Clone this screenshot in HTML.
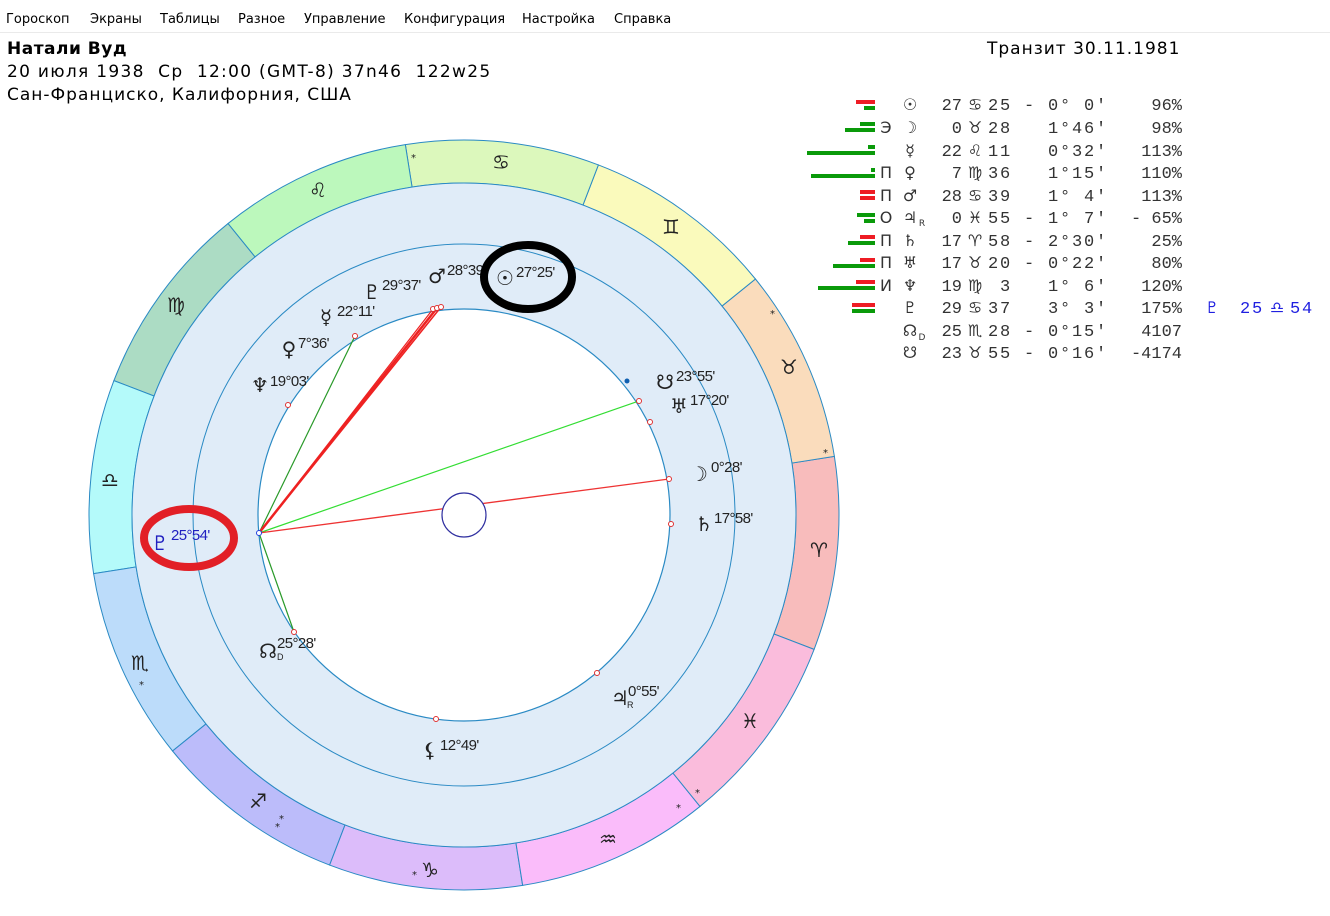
<!DOCTYPE html>
<html><head><meta charset="utf-8">
<style>
html,body{margin:0;padding:0;background:#fff;width:1330px;height:916px;overflow:hidden;}
body{font-family:"Liberation Sans","DejaVu Sans",sans-serif;position:relative;}
.menu{position:absolute;top:0;left:0;width:1330px;height:32px;border-bottom:1px solid #eaeaea;font-size:13px;font-family:"DejaVu Sans",sans-serif;}
.menu span{position:absolute;top:12px;color:#000;}
.hd{position:absolute;font-size:17px;color:#000;white-space:nowrap;font-family:"DejaVu Sans",sans-serif;letter-spacing:1px;}
svg{position:absolute;left:0;top:0;}
</style></head><body>
<div class="menu">
<span style="left:6px">Гороскоп</span><span style="left:90px">Экраны</span><span style="left:160px">Таблицы</span><span style="left:238px">Разное</span><span style="left:304px">Управление</span><span style="left:404px">Конфигурация</span><span style="left:522px">Настройка</span><span style="left:614px">Справка</span>
</div>
<div class="hd" style="left:7px;top:39px;font-weight:bold;letter-spacing:0.5px">Натали Вуд</div>
<div class="hd" style="left:7px;top:62px;letter-spacing:1.3px">20 июля 1938&nbsp; Ср&nbsp; 12:00 (GMT-8) 37n46&nbsp; 122w25</div>
<div class="hd" style="left:7px;top:85px">Сан-Франциско, Калифорния, США</div>
<div class="hd" style="left:987px;top:39px">Транзит 30.11.1981</div>

<svg width="1330" height="916" viewBox="0 0 1330 916" xmlns="http://www.w3.org/2000/svg">
<g id="rings"></g>
<g id="lines" stroke-linecap="round">
<line x1="259" y1="533" x2="355" y2="336" stroke="#2a9a2a" stroke-width="1.2"/>
<line x1="259" y1="533" x2="294" y2="632" stroke="#2a9a2a" stroke-width="1.2"/>
<line x1="259" y1="533" x2="639" y2="401" stroke="#33dd33" stroke-width="1.2"/>
<line x1="259" y1="533" x2="669" y2="479" stroke="#ee3333" stroke-width="1.3"/>
<line x1="259" y1="533" x2="437" y2="308" stroke="#ee2222" stroke-width="2.5"/>
<line x1="259" y1="533" x2="441" y2="307" stroke="#ee2222" stroke-width="1.5"/>
<line x1="259" y1="533" x2="433" y2="309" stroke="#ee2222" stroke-width="1.2"/>
</g>
<circle cx="464" cy="515" r="22" fill="#fff" stroke="#3030a0" stroke-width="1.2"/>
<g fill="#fff" stroke="#e03030" stroke-width="1">
<circle cx="433" cy="309" r="2.5"/><circle cx="437" cy="308" r="2.5"/><circle cx="441" cy="307" r="2.5"/>
<circle cx="355" cy="336" r="2.5"/><circle cx="288" cy="405" r="2.5"/><circle cx="639" cy="401" r="2.5"/>
<circle cx="650" cy="422" r="2.5"/><circle cx="669" cy="479" r="2.5"/><circle cx="671" cy="524" r="2.5"/>
<circle cx="597" cy="673" r="2.5"/><circle cx="436" cy="719" r="2.5"/><circle cx="294" cy="632" r="2.5"/>
</g>
<circle cx="627" cy="381" r="2.5" fill="#1060b0"/>
<circle cx="259" cy="533" r="2.5" fill="#fff" stroke="#2040e0"/>

<g font-family="DejaVu Sans,sans-serif" font-size="20" fill="#222" text-anchor="middle">
<text x="501" y="169">♋&#xFE0E;</text>
<text x="318" y="197">♌&#xFE0E;</text>
<text x="176" y="312">♍&#xFE0E;</text>
<text x="110" y="487">♎&#xFE0E;</text>
<text x="140" y="670">♏&#xFE0E;</text>
<text x="258" y="808">♐&#xFE0E;</text>
<text x="430" y="877">♑&#xFE0E;</text>
<text x="608" y="846">♒&#xFE0E;</text>
<text x="750" y="728">♓&#xFE0E;</text>
<text x="819" y="557">♈&#xFE0E;</text>
<text x="789" y="374">♉&#xFE0E;</text>
<text x="671" y="234">♊&#xFE0E;</text>
</g>
<g font-family="DejaVu Sans,sans-serif" font-size="10" fill="#222">
<text x="411" y="161">*</text><text x="770" y="317">*</text><text x="823" y="456">*</text>
<text x="139" y="688">*</text><text x="275" y="830">*</text><text x="279" y="822">*</text>
<text x="412" y="878">*</text><text x="676" y="811">*</text><text x="695" y="796">*</text>
</g>

<g font-family="DejaVu Sans,sans-serif" font-size="20" fill="#222" text-anchor="middle">
<text x="505" y="285">☉&#xFE0E;</text>
<text x="437" y="283">♂&#xFE0E;</text>
<text x="372" y="299">♇&#xFE0E;</text>
<text x="326" y="324">☿&#xFE0E;</text>
<text x="289" y="356">♀&#xFE0E;</text>
<text x="260" y="392">♆&#xFE0E;</text>
<text x="665" y="389">☋&#xFE0E;</text>
<text x="679" y="413">♅&#xFE0E;</text>
<text x="699" y="481">☽&#xFE0E;</text>
<text x="704" y="531">♄&#xFE0E;</text>
<text x="620" y="705">♃&#xFE0E;</text>
<text x="430" y="757">⚸&#xFE0E;</text>
<text x="268" y="658">☊&#xFE0E;</text>
<text x="160" y="550" fill="#2020c0">♇&#xFE0E;</text>
</g>
<g font-family="Liberation Sans,sans-serif" font-size="15" fill="#222" letter-spacing="-0.6">
<text x="516" y="277">27°25'</text>
<text x="447" y="275">28°39'</text>
<text x="382" y="290">29°37'</text>
<text x="337" y="316">22°11'</text>
<text x="298" y="348">7°36'</text>
<text x="270" y="386">19°03'</text>
<text x="676" y="381">23°55'</text>
<text x="690" y="405">17°20'</text>
<text x="711" y="472">0°28'</text>
<text x="714" y="523">17°58'</text>
<text x="628" y="696">0°55'</text>
<text x="440" y="750">12°49'</text>
<text x="277" y="648">25°28'</text>
<text x="171" y="540" fill="#2020c0">25°54'</text>
<text x="627" y="708" font-size="9">R</text>
<text x="277" y="660" font-size="9">D</text>
</g>
<ellipse cx="528" cy="277" rx="44" ry="32" fill="none" stroke="#000" stroke-width="8"/>
<ellipse cx="189" cy="538" rx="45" ry="29" fill="none" stroke="#e21f26" stroke-width="8"/>

<g>
<rect x="856" y="100" width="19" height="4" fill="#ee1c24"/><rect x="864" y="106" width="11" height="4" fill="#0a9a0a"/>
<rect x="860" y="122" width="15" height="4" fill="#0a9a0a"/><rect x="845" y="128" width="30" height="4" fill="#0a9a0a"/>
<rect x="868" y="145" width="7" height="4" fill="#0a9a0a"/><rect x="807" y="151" width="68" height="4" fill="#0a9a0a"/>
<rect x="871" y="168" width="4" height="4" fill="#0a9a0a"/><rect x="811" y="174" width="64" height="4" fill="#0a9a0a"/>
<rect x="860" y="190" width="15" height="4" fill="#ee1c24"/><rect x="860" y="196" width="15" height="4" fill="#ee1c24"/>
<rect x="857" y="213" width="18" height="4" fill="#0a9a0a"/><rect x="864" y="219" width="11" height="4" fill="#0a9a0a"/>
<rect x="860" y="235" width="15" height="4" fill="#ee1c24"/><rect x="848" y="241" width="27" height="4" fill="#0a9a0a"/>
<rect x="860" y="258" width="15" height="4" fill="#ee1c24"/><rect x="833" y="264" width="42" height="4" fill="#0a9a0a"/>
<rect x="856" y="280" width="19" height="4" fill="#ee1c24"/><rect x="818" y="286" width="57" height="4" fill="#0a9a0a"/>
<rect x="852" y="303" width="23" height="4" fill="#ee1c24"/><rect x="852" y="309" width="23" height="4" fill="#0a9a0a"/>
</g>
<g font-family="Liberation Mono,DejaVu Sans Mono,monospace" font-size="17" fill="#333">
<g text-anchor="middle" font-family="DejaVu Sans,sans-serif" font-size="16">
<text x="886" y="133">Э</text><text x="886" y="178">П</text><text x="886" y="201">П</text><text x="886" y="223">О</text>
<text x="886" y="246">П</text><text x="886" y="268">П</text><text x="886" y="291">И</text>
<text x="910" y="110">☉&#xFE0E;</text><text x="910" y="133">☽&#xFE0E;</text><text x="910" y="156">☿&#xFE0E;</text>
<text x="910" y="178">♀&#xFE0E;</text><text x="910" y="201">♂&#xFE0E;</text><text x="910" y="223">♃&#xFE0E;</text>
<text x="910" y="246">♄&#xFE0E;</text><text x="910" y="268">♅&#xFE0E;</text><text x="910" y="291">♆&#xFE0E;</text>
<text x="910" y="313">♇&#xFE0E;</text><text x="910" y="336">☊&#xFE0E;</text><text x="910" y="358">☋&#xFE0E;</text>
<text x="975" y="110">♋&#xFE0E;</text><text x="975" y="133">♉&#xFE0E;</text><text x="975" y="156">♌&#xFE0E;</text>
<text x="975" y="178">♍&#xFE0E;</text><text x="975" y="201">♋&#xFE0E;</text><text x="975" y="223">♓&#xFE0E;</text>
<text x="975" y="246">♈&#xFE0E;</text><text x="975" y="268">♉&#xFE0E;</text><text x="975" y="291">♍&#xFE0E;</text>
<text x="975" y="313">♋&#xFE0E;</text><text x="975" y="336">♏&#xFE0E;</text><text x="975" y="358">♉&#xFE0E;</text>
<text x="1212" y="313" fill="#2020e0">♇&#xFE0E;</text>
<text x="922" y="226" font-size="9">R</text><text x="922" y="340" font-size="9">D</text>
</g>
<g text-anchor="end">
<text x="962" y="110">27</text><text x="962" y="133">0</text><text x="962" y="156">22</text><text x="962" y="178">7</text>
<text x="962" y="201">28</text><text x="962" y="223">0</text><text x="962" y="246">17</text><text x="962" y="268">17</text>
<text x="962" y="291">19</text><text x="962" y="313">29</text><text x="962" y="336">25</text><text x="962" y="358">23</text>
<text x="1182" y="110">96%</text><text x="1182" y="133">98%</text><text x="1182" y="156">113%</text><text x="1182" y="178">110%</text>
<text x="1182" y="201">113%</text><text x="1182" y="223">-&#160;65%</text><text x="1182" y="246">25%</text><text x="1182" y="268">80%</text>
<text x="1182" y="291">120%</text><text x="1182" y="313">175%</text><text x="1182" y="336">4107</text><text x="1182" y="358">-4174</text>
</g>
<g letter-spacing="1.8">
<text x="988" y="110">25&#160;-&#160;0°&#160;0'</text>
<text x="988" y="133">28&#160;&#160;&#160;1°46'</text>
<text x="988" y="156">11&#160;&#160;&#160;0°32'</text>
<text x="988" y="178">36&#160;&#160;&#160;1°15'</text>
<text x="988" y="201">39&#160;&#160;&#160;1°&#160;4'</text>
<text x="988" y="223">55&#160;-&#160;1°&#160;7'</text>
<text x="988" y="246">58&#160;-&#160;2°30'</text>
<text x="988" y="268">20&#160;-&#160;0°22'</text>
<text x="988" y="291">&#160;3&#160;&#160;&#160;1°&#160;6'</text>
<text x="988" y="313">37&#160;&#160;&#160;3°&#160;3'</text>
<text x="988" y="336">28&#160;-&#160;0°15'</text>
<text x="988" y="358">55&#160;-&#160;0°16'</text>
</g>
<text x="1240" y="313" fill="#2020e0" letter-spacing="1.8">25</text>
<text x="1277" y="313" fill="#2020e0" font-family="DejaVu Sans,sans-serif" font-size="16" text-anchor="middle">♎&#xFE0E;</text>
<text x="1290" y="313" fill="#2020e0" letter-spacing="1.8">54</text>
</g>
</svg>
<script>
(function(){
var cx=464,cy=515,R=375,r1=332,r2=271,r3=206;
var cols=["#f8bcbc","#fadcbc","#fafabc","#dcf8bc","#bcf8bc","#acdcc4","#b4fafa","#bcdcfa","#bcbcfa","#dcbcfa","#fabcfa","#fabcdc"];
var g=document.getElementById('rings');var h="";
function p(r,a){a=a*Math.PI/180;return (cx+r*Math.cos(a)).toFixed(2)+","+(cy-r*Math.sin(a)).toFixed(2);}
for(var i=0;i<12;i++){var a0=339+30*i,a1=a0+30;
h+='<path d="M'+p(R,a0)+' A'+R+','+R+' 0 0 0 '+p(R,a1)+' L'+p(r1,a1)+' A'+r1+','+r1+' 0 0 1 '+p(r1,a0)+' Z" fill="'+cols[i]+'" stroke="#2a8ac4" stroke-width="1"/>';}
h+='<circle cx="'+cx+'" cy="'+cy+'" r="'+r1+'" fill="#e0ecf8" stroke="#2a8ac4" stroke-width="1"/>';
h+='<circle cx="'+cx+'" cy="'+cy+'" r="'+r2+'" fill="none" stroke="#2a8ac4" stroke-width="1"/>';
h+='<circle cx="'+cx+'" cy="'+cy+'" r="'+r3+'" fill="#fff" stroke="#2a8ac4" stroke-width="1.2"/>';
g.innerHTML=h;
})();
</script>
</body></html>
